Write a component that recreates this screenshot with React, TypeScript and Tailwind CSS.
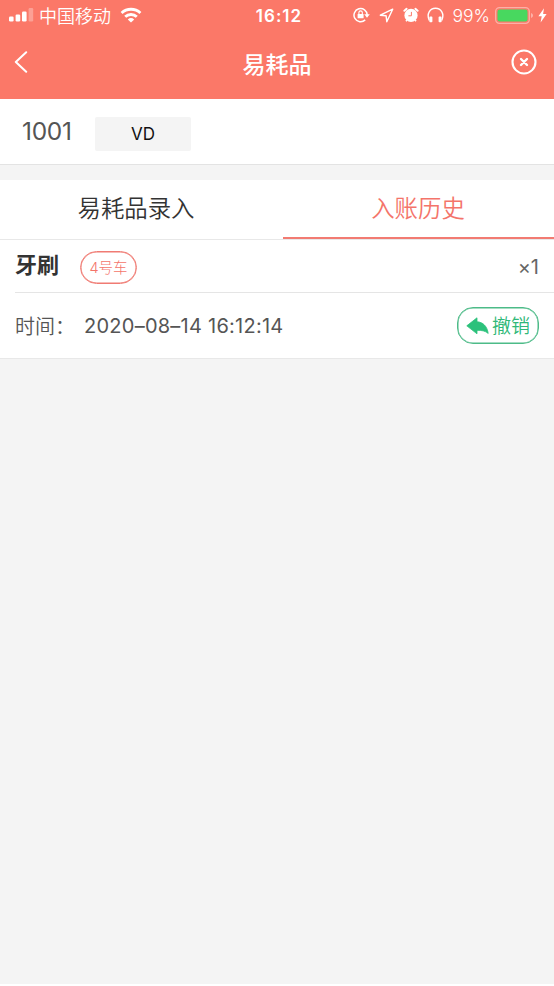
import { useState } from 'react'

const font = "font-['Inter','Noto_Sans_CJK_SC',sans-serif]"

interface HistoryRecord {
  id: number
  name: string
  cart: string
  count: number
  time: string
}

const records: HistoryRecord[] = [
  { id: 1, name: '牙刷', cart: '4号车', count: 1, time: '2020–08–14 16:12:14' },
]

const tabs = [
  { key: 'entry', label: '易耗品录入' },
  { key: 'history', label: '入账历史' },
]

function SignalIcon() {
  return (
    <svg className="w-[25px] h-[14px]" viewBox="0 0 25 14" fill="currentColor">
      <rect x="0" y="8.5" width="4.6" height="5" rx="1.2" />
      <rect x="6.6" y="6.5" width="4.6" height="7" rx="1.2" />
      <rect x="13" y="3.5" width="4.6" height="10" rx="1.2" />
      <rect x="19.6" y="0" width="4.6" height="13.5" rx="1.2" opacity="0.3" />
    </svg>
  )
}

function WifiIcon() {
  return (
    <svg className="w-[22px] h-[16px]" viewBox="0 0 22 16" fill="none" stroke="currentColor" strokeWidth="2.9">
      <path d="M1.6 6a13.8 13.8 0 0 1 18.8 0" />
      <path d="M5.2 9.8a8.5 8.5 0 0 1 11.6 0" />
      <path d="M11 15.4 7.8 12.4a4.7 4.7 0 0 1 6.4 0z" fill="currentColor" stroke="none" />
    </svg>
  )
}

function RotationLockIcon() {
  return (
    <svg className="w-[17px] h-[16px]" viewBox="0 0 17 16" fill="none" stroke="currentColor" strokeWidth="1.5">
      <path d="M12.2 12.9A6.6 6.6 0 1 1 14.2 8" />
      <path d="M11.2 7.2h5.6L14 10.8z" fill="currentColor" stroke="none" />
      <rect x="4.6" y="7" width="6" height="4.3" rx="0.6" fill="currentColor" stroke="none" />
      <path d="M5.9 7.2V5.6a1.7 1.7 0 0 1 3.4 0v1.6" strokeWidth="1.1" />
    </svg>
  )
}

function LocationIcon() {
  return (
    <svg className="w-[15px] h-[15px]" viewBox="0 0 15 15" fill="none" stroke="currentColor" strokeWidth="1.4" strokeLinejoin="round">
      <path d="M13.7 1.2 1.3 7.2l5.8.6.7 5.9z" />
    </svg>
  )
}

function AlarmIcon() {
  return (
    <svg className="w-[16px] h-[16px]" viewBox="0 0 16 16" fill="none">
      <circle cx="8" cy="8.4" r="6.6" fill="currentColor" />
      <path d="M1.4 3.8 3.6 1.8M14.6 3.8l-2.2-2" stroke="currentColor" strokeWidth="2" strokeLinecap="round" />
      <path d="m4 13-1 1.3M12 13l1 1.3" stroke="currentColor" strokeWidth="1.6" />
      <path d="M8.4 4.9v3.9H5.4" stroke="#fb7868" strokeWidth="1" />
    </svg>
  )
}

function HeadphonesIcon() {
  return (
    <svg className="w-[17px] h-[16px]" viewBox="0 0 17 16" fill="none">
      <path d="M2.3 13.5C-.8 6.8 3 1.2 8.5 1.2s9.3 5.6 6.2 12.3" stroke="currentColor" strokeWidth="1.4" />
      <rect x="2.4" y="9.6" width="3" height="5.6" rx="0.8" fill="currentColor" />
      <rect x="11.6" y="9.6" width="3" height="5.6" rx="0.8" fill="currentColor" />
    </svg>
  )
}

function BatteryIcon() {
  return (
    <svg className="w-[39px] h-[17px]" viewBox="0 0 39 17" fill="none">
      <rect x="0.7" y="0.7" width="33.6" height="15.6" rx="3.8" stroke="#fff" strokeOpacity="0.42" strokeWidth="1.3" />
      <rect x="2.5" y="2.5" width="30" height="12" rx="2.2" fill="#48d85f" />
      <path d="M36 6v5c1.3-.5 2-1.4 2-2.5S37.3 6.5 36 6z" fill="#fff" fillOpacity="0.42" />
    </svg>
  )
}

function BoltIcon() {
  return (
    <svg className="w-[9px] h-[15px]" viewBox="0 0 9 15" fill="currentColor">
      <path d="M6 .3.4 8.3h3.3L2.6 14.5 8.6 6.1H5.1z" />
    </svg>
  )
}

function ReplyIcon() {
  return (
    <svg className="w-[23px] h-[18px]" viewBox="0 0 23 18" fill="#2cc17b" stroke="#2cc17b" strokeWidth="0.8" strokeLinejoin="round">
      <path d="M.8 8.8 11 .8v4c5.8.2 10.2 4.400 11.200 11.600-3.200-2.600-6.400-3.200-11.200-3v3.400z" />
    </svg>
  )
}

function StatusBar() {
  return (
    <div className="grid h-[30px] grid-cols-[1fr_auto_1fr] items-center pl-[9px] pr-[7px]">
      <div className="flex items-center">
        <SignalIcon />
        <span className="ml-[5px] pt-[3px] text-[18px] font-[350] leading-[27px]">中国移动</span>
        <span className="ml-[9px]"><WifiIcon /></span>
      </div>
      <span className="pl-[2px] pt-[2px] text-[17px] font-semibold leading-[28px] tracking-[1px]">16:12</span>
      <div className="flex items-center justify-end">
        <RotationLockIcon />
        <span className="ml-[9px]"><LocationIcon /></span>
        <span className="ml-[9px]"><AlarmIcon /></span>
        <span className="ml-[8px]"><HeadphonesIcon /></span>
        <span className="ml-[9px] pt-[2px] text-[17.5px] font-[350] leading-[28px]">99%</span>
        <span className="ml-[5px]"><BatteryIcon /></span>
        <span className="ml-[4px]"><BoltIcon /></span>
      </div>
    </div>
  )
}

function NavBar() {
  return (
    <div className="flex h-[69px] items-center justify-between pl-[14px] pr-[17px] pb-[6px]">
      <button className="w-[29px]">
        <svg className="h-[22px] w-[14px]" viewBox="0 0 14 22" fill="none" stroke="currentColor" strokeWidth="2" strokeLinecap="round" strokeLinejoin="round">
          <path d="M12.2 1.2 1.8 11l10.4 9.8" />
        </svg>
      </button>
      <h1 className="pt-[6px] text-[23px] font-medium leading-[34px]">易耗品</h1>
      <button>
        <svg className="size-[26px]" viewBox="0 0 26 26" fill="none" stroke="currentColor">
          <circle cx="13" cy="13" r="11.5" strokeWidth="2.1" />
          <path d="m10 10 6 6M16 10l-6 6" strokeWidth="2.4" strokeLinecap="round" />
        </svg>
      </button>
    </div>
  )
}

export default function App() {
  const [active, setActive] = useState('history')

  return (
    <div className={`${font} flex h-[986px] w-[554px] flex-col overflow-hidden bg-white text-[#555]`}>
      <header className="h-[99px] bg-[#fb7868] text-white">
        <StatusBar />
        <NavBar />
      </header>

      {/* Room */}
      <section className="flex h-[66px] items-start border-b border-[#e3e3e3] pl-[22px]">
        <span className="w-[73px] pt-[15px] text-[24.5px] leading-[34px] tracking-[-0.3px]">1001</span>
        <span className="mt-[18px] h-[34px] w-[96px] rounded-[2px] bg-[#f4f4f4] text-center text-[17px] leading-[34px] text-[#111]">VD</span>
      </section>

      <main className="h-[819px] bg-[#f4f4f4] pt-[15px]">
        {/* Tabs */}
        <div className="flex h-[60px] border-b border-[#e8e8e8] bg-white">
          {tabs.map(({ key, label }) => (
            <button
              key={key}
              onClick={() => setActive(key)}
              className={`h-[59px] border-b-2 text-[23.4px] font-[350] leading-[56px] ${key === 'entry' ? 'w-[283px] pr-[11px]' : 'w-[271px] pr-[1px]'} ${
                active === key ? 'border-[#f27b72] text-[#f4746a]' : 'border-transparent text-[#333]'
              }`}
            >
              {label}
            </button>
          ))}
        </div>

        {records.map(record => (
          <div key={record.id} className="border-b border-[#e8e8e8] bg-white pl-[15px]">
            <div className="flex h-[53px] items-center border-b border-[#e5e5e5] pr-[15px]">
              <span className="pb-[2px] text-[22px] font-bold leading-[32px] text-[#333]">{record.name}</span>
              <span className="ml-[21px] mt-[2px] h-[33px] w-[57px] rounded-full border border-[#f07b73] text-center text-[14.5px] font-light leading-[32px] text-[#f4746a] shadow-[inset_0_0_0_0.5px_#f07b73]">
                {record.cart}
              </span>
              <span className="ml-auto pt-[2px] text-[20px] text-[#666] [font-feature-settings:'calt'_0]">×{record.count}</span>
            </div>
            <div className="flex h-[65px] items-center pr-[15px]">
              <span className="w-[69px] pt-[3px] text-[20px] font-[350] leading-[30px]">时间：</span>
              <span className="pt-px text-[20px] leading-[30px] tracking-[0.25px] [font-feature-settings:'calt'_0]">{record.time}</span>
              <button className="ml-auto flex h-[37px] w-[82px] items-center justify-center gap-[3px] rounded-[16px] border border-[#4dbb88] text-[19px] font-[350] leading-[34px] text-[#2fb878] shadow-[inset_0_0_0_0.5px_#4dbb88]">
                <ReplyIcon />
                <span className="pt-[3px]">撤销</span>
              </button>
            </div>
          </div>
        ))}
      </main>
    </div>
  )
}
